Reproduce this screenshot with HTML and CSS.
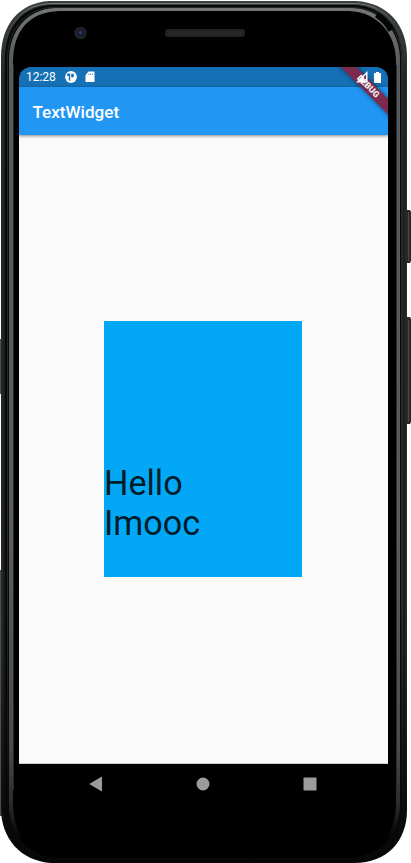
FILE: index.html
```
<!DOCTYPE html>
<html lang="en">
<head>
<meta charset="utf-8">
<title>TextWidget</title>
<link rel="stylesheet" href="styles.css">
</head>
<body>
<div class="device">
  <svg class="shell" width="411" height="863" viewBox="0 0 411 863" aria-hidden="true">
    <defs>
      <linearGradient id="rim" x1="0" y1="0" x2="0" y2="1">
        <stop offset="0" stop-color="#747776"/>
        <stop offset=".07" stop-color="#58595a"/>
        <stop offset=".62" stop-color="#5c5d5d"/>
        <stop offset=".87" stop-color="#4a4b4d"/>
        <stop offset=".94" stop-color="#28292b"/>
        <stop offset=".98" stop-color="#000"/>
      </linearGradient>
      <linearGradient id="edge" x1="0" y1="0" x2="0" y2="1">
        <stop offset="0" stop-color="#3b403e"/>
        <stop offset=".1" stop-color="#252928"/>
        <stop offset=".75" stop-color="#252828"/>
        <stop offset=".9" stop-color="#111213"/>
        <stop offset="1" stop-color="#050506"/>
      </linearGradient>
      <linearGradient id="shine" x1="0" y1="0" x2="0" y2="1">
        <stop offset="0" stop-color="#777b7a"/>
        <stop offset=".025" stop-color="#444748"/>
        <stop offset=".08" stop-color="#1b1e1e"/>
        <stop offset="1" stop-color="#080809"/>
      </linearGradient>
      <linearGradient id="groove" gradientUnits="userSpaceOnUse" x1="0" y1="0" x2="0" y2="863">
        <stop offset="0" stop-color="#252828"/>
        <stop offset=".7" stop-color="#252828"/>
        <stop offset=".92" stop-color="#080a0a"/>
      </linearGradient>
    </defs>
    <path fill="#4b4e4d" d="M0 339h2v55H0zM0 570h2v246H0z"/>
    <path fill="#28292a" d="M406 210h4l1 2v49l-1 2h-4zM406 317h4l1 2v103l-1 2h-4z"/>
    <path fill="#494a4b" d="M408 212h1v49h-1zM408 320h1v102h-1z"/>
    <path fill="url(#edge)" d="M49 1H356C388 3 407 25 407 57V810C407 841 387 863 354 863H51C21 861 1 839 1 808V57C1 25 19 3 49 1Z"/>
    <path fill="none" stroke="url(#shine)" d="M50 3.500H356C385 5 404 27 404 58V808C404 838 384 860 354 860H52C24 859 4 838 4 807V58C4 27 20 5 50 3.500Z"/>
    <path fill="#080a0a" d="M51 5H355C384 7 402 28 402 59V806C402 838 382 859 352 859H53C25 858 5 837 5 806V58C5 28 22 6 51 5Z"/>
    <path fill="none" stroke="url(#groove)" d="M52 7.500H354C382 9 401.500 30 401.500 59V800M7.500 802V59C7.500 31 24 9 52 7.500"/>
    <path fill="url(#rim)" d="M55 8H352C381 9 400 31 400 60V804C400 836 381 857 350 857H55C28 856 9 835 9 804V60C9 31 27 9 55 8Z"/>
    <path fill="#000" d="M59 11H349C377 12 396 33 396 62V803C396 835 376 858 348 858H57C29 858 13 834 13 802V62C13 31 29 12 59 11Z"/>
    <path fill="none" stroke="#050505" stroke-width="5.500" d="M376.500 15Q386 21 391 30.500"/>
    <path fill="none" stroke="#28292a" d="M13.500 65V790M396.500 65V790"/>
    <rect x="165" y="29" width="80" height="8" rx="3" fill="#202121"/>
    <rect x="168" y="31" width="74" height="4" fill="#282929"/>
    <circle cx="80.500" cy="33" r="6.300" fill="#202122"/>
    <circle cx="80.500" cy="33" r="3.800" fill="#151d34"/>
    <circle cx="80.500" cy="32.500" r="1.500" fill="#304276"/>
  </svg>
  <main class="screen">
    <header class="status">
      <span class="clock">12:28</span>
      <svg class="notice" width="12" height="12" viewBox="0 0 12 12"><circle cx="6" cy="6" r="5.900" fill="#fff"/><path fill="#1570b6" d="M2.200 2.500h3v7.300Q4.300 9.800 3.800 9.200V5H2.200zM6.200 2.800h2.600v3.400H6.200z"/></svg>
      <svg class="card" width="10" height="12" viewBox="0 0 10 12"><path fill="#fff" fill-rule="evenodd" d="M3.500.5H9q.5 0 .5.500v9.500q0 .5-.5.500H1q-.5 0-.5-.5V4zM3.500 2.500h.7v1.500h-.7zM5.300 2.500h.7v1.500h-.7zM7.100 2.500h.7v1.500h-.7z"/></svg>
      <svg class="battery" width="7" height="11" viewBox="0 0 7 11"><path fill="#fff" d="M2 0h3v1h1.500q.5 0 .5.500v9q0 .5-.5.500h-6q-.5 0-.5-.5v-9Q0 1 .5 1H2z"/></svg>
    </header>
    <div class="appbar"><h1>TextWidget</h1></div>
    <div class="content"><div class="box"><p>Hello<br>Imooc</p></div></div>
    <nav class="navigation">
      <svg width="14" height="16" viewBox="0 0 14 16"><path fill="#9b9b9b" d="M12 1q1-.5 1 .5v13q0 1-1 .5L1 8.500Q.3 8 1 7.500z"/></svg>
      <svg width="14" height="14" viewBox="0 0 14 14"><circle cx="7" cy="7" r="6.500" fill="#9b9b9b"/></svg>
      <svg width="14" height="14" viewBox="0 0 14 14"><rect x=".5" y=".5" width="13" height="13" rx=".7" fill="#9b9b9b"/></svg>
    </nav>
    <div class="banner"><span>DEBUG</span></div>
    <svg class="signal" width="12" height="12" viewBox="0 0 12 12"><path fill="#fff" fill-rule="evenodd" d="M11.500 0v11.500H0zM8 5.500v4.500h2V3.500z"/></svg>
  </main>
</div>
</body>
</html>
```
FILE: styles.css
```
* { box-sizing: border-box; }
body { margin: 0; background: #fff; font-family: Roboto, sans-serif; }
.device { position: relative; width: 411px; height: 863px; padding: 67px 23px 58px 19px; overflow: hidden; }
.shell { position: absolute; inset: 0; }
.screen { position: relative; width: 369px; height: 738px; display: flex; flex-direction: column; background: #000; border-radius: 12px; overflow: hidden; }
.status { height: 20px; flex: none; display: flex; align-items: center; padding: 0 7px; background: #1570b6; color: #fff; }
.clock { width: 39px; font-size: 12px; line-height: 20px; letter-spacing: -.05px; }
.card { margin-left: 8px; }
.battery { margin-left: auto; }
.appbar { height: 48px; flex: none; display: flex; align-items: center; padding: 1px 13.500px 0; background: #2196f3; box-shadow: 0 1px 3px #0007; position: relative; }
h1 { margin: 0; color: #fff; font-size: 17.100px; line-height: 24px; font-weight: 500; }
.content { flex: 1; display: flex; align-items: center; justify-content: center; padding-bottom: 1px; background: #fafafa; border-bottom: 1px solid #ccc; }
.box { width: 198px; height: 256px; margin-right: 1px; display: flex; align-items: flex-end; padding-bottom: 34px; background: #02a8f6; }
.box p { margin: 0; color: #001b28; font-size: 34.200px; line-height: 40px; }
.navigation { height: 41px; flex: none; display: flex; align-items: center; justify-content: space-between; padding: 0 71px 1px 70px; background: #000; }
.banner { position: absolute; left: 299px; top: 13.500px; width: 100px; height: 11px; display: flex; justify-content: center; align-items: center; background: #7c2b4e; color: #eee; transform: rotate(45deg); box-shadow: 0 0 5px #0008; font-size: 8.700px; font-weight: 900; line-height: 11px; }
.signal { position: absolute; left: 337px; top: 4px; }
```
